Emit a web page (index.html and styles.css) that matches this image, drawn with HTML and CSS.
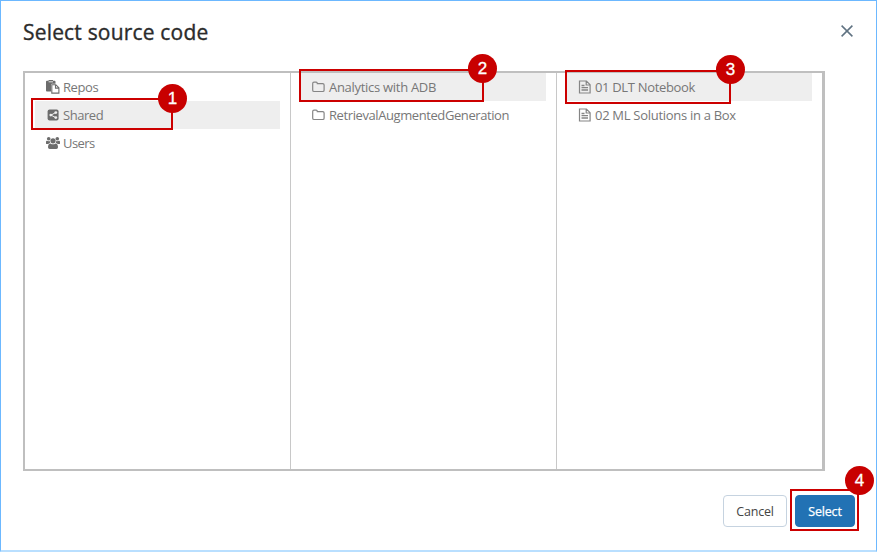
FILE: index.html
```html
<!DOCTYPE html>
<html lang="en">
<head>
<meta charset="utf-8">
<title>Select source code</title>
<link rel="stylesheet" href="styles.css">
</head>
<body>
<svg class="defs" width="0" height="0" aria-hidden="true">
  <symbol id="folder" viewBox="0 0 14 14"><path d="M.7 3.5Q.7 2.2 2 2.2H4.1Q5.3 2.2 5.3 3.4V3.7H10.7Q12.1 3.7 12.1 5V10.2Q12.1 11.5 10.7 11.5H2.1Q.7 11.5 .7 10.2Z" fill="none" stroke="currentColor" stroke-width="1.2"/></symbol>
  <symbol id="file" viewBox="0 0 14 14"><path d="M1.5 1H8.4L12.1 4.7V13H1.5ZM8.2 1V5H12.1" fill="none" stroke="currentColor" stroke-width="1.2"/><path d="M3.5 5.5H6.5M3.5 7.7H10M3.5 10H10" stroke="currentColor" stroke-width="1.3"/></symbol>
</svg>
<main class="dialog">
  <header class="header">
    <h1 class="title">Select source code</h1>
    <svg class="close" viewBox="0 0 12 12"><path d="M.6.6 11.4 11.4M11.4.6.6 11.4" stroke="#5f7281" stroke-width="1.5"/></svg>
  </header>
  <section class="browser">
    <ul class="column root">
      <li class="row"><svg class="icon" viewBox="0 0 14 14"><path d="M0 1.7Q0 .8.9.8H2.6V0H7V.8H8.6Q9.5.8 9.5 1.7V3.8H6.2Q5 3.8 5 5V11.5H.9Q0 11.5 0 10.6Z" fill="currentColor"/><path d="M2.6 1.8H7" stroke="#fff" stroke-width=".8"/><path d="M5.8 4.7H9.8L12.9 7.8V13.1H5.8ZM9.5 4.9V8.1H12.8" fill="none" stroke="currentColor" stroke-width="1.1"/></svg><span class="repos">Repos</span></li>
      <li class="row active"><svg class="icon" viewBox="0 0 14 14"><rect x="1.6" y="1.6" width="11" height="11" rx="2" fill="currentColor"/><path d="M9.8 4.5 5 7.1 9.8 9.7" fill="none" stroke="#eee" stroke-width="1"/><g fill="#eee"><circle cx="9.8" cy="4.6" r="1.4"/><circle cx="4.8" cy="7.1" r="1.4"/><circle cx="9.8" cy="9.6" r="1.4"/></g></svg><span class="shared">Shared</span>
        <div class="callout one"><b class="badge">1</b></div></li>
      <li class="row"><svg class="icon" viewBox="0 0 14 14" fill="currentColor"><circle cx="2.7" cy="2.7" r="1.8"/><circle cx="11.3" cy="2.7" r="1.8"/><path d="M0 7.4V6Q0 4.4 1.2 4.7Q2.8 5.5 3.8 4.8Q3.6 6.2 4.3 7.1Q3 7.1 2.3 8H1Q0 8 0 7.4ZM14 7.4V6Q14 4.4 12.8 4.7Q11.2 5.5 10.2 4.8Q10.4 6.2 9.7 7.1Q11 7.1 11.7 8H13Q14 8 14 7.4Z"/><circle cx="7" cy="4.8" r="2.6"/><path d="M4.5 7.4Q7 9.2 9.5 7.4Q12 7.5 12 11.2Q12 13 10.3 13H3.7Q2 13 2 11.2Q2 7.5 4.5 7.4Z"/></svg><span class="users">Users</span></li>
    </ul>
    <ul class="column">
      <li class="row active"><svg class="icon"><use href="#folder"/></svg><span class="analytics">Analytics with ADB</span>
        <div class="callout two"><b class="badge">2</b></div></li>
      <li class="row"><svg class="icon"><use href="#folder"/></svg><span class="retrieval">RetrievalAugmentedGeneration</span></li>
    </ul>
    <ul class="column">
      <li class="row active"><svg class="icon"><use href="#file"/></svg><span class="dlt">01 DLT Notebook</span>
        <div class="callout three"><b class="badge">3</b></div></li>
      <li class="row"><svg class="icon"><use href="#file"/></svg><span class="ml">02 ML Solutions in a Box</span></li>
    </ul>
  </section>
  <footer class="footer">
    <button class="btn">Cancel</button>
    <div class="primary-wrap"><button class="btn primary">Select</button>
      <div class="callout four"><b class="badge">4</b></div></div>
  </footer>
</main>
</body>
</html>
```
FILE: styles.css
```css
* { box-sizing: border-box; }
body { margin: 0; background: #fff; font-family: "Open Sans", "Noto Sans", sans-serif; }
.defs { position: absolute; }
.dialog {
  width: 877px; height: 552px; padding: 0 17px 0 22px;
  border: 1px solid #6cb8ff; border-bottom: 2px solid #b9dfff;
  display: flex; flex-direction: column;
}
.header { height: 70px; display: flex; justify-content: space-between; align-items: flex-start; }
.title { margin: 15px 0 0 0; font-size: 21px; line-height: 32px; font-weight: 400; color: #2b2b2b; letter-spacing: .18px; -webkit-text-stroke: .35px #2b2b2b; }
.close { width: 12px; height: 12px; margin: 24px 6px 0 0; }
.browser { width: 802px; height: 400px; border: 2px solid #bfbfbf; border-right-width: 3px; display: grid; grid-template-columns: 266px 266px 1fr; }
.column { margin: 0; padding: 0; list-style: none; border-right: 1px solid #c8c8c8; }
.column:last-child { border-right: 0; }
.row {
  position: relative; height: 28px; margin: 0 10px; padding-left: 11px;
  display: flex; align-items: center; gap: 3px;
  font-size: 13px; line-height: 20px; color: #777; white-space: nowrap;
}
.row.active { background: #eee; }
.repos { letter-spacing: -.4px; }
.shared { letter-spacing: -.45px; }
.users { letter-spacing: -.55px; }
.analytics { letter-spacing: -.29px; }
.retrieval { letter-spacing: -.41px; }
.dlt { letter-spacing: -.33px; }
.ml { letter-spacing: -.29px; }
.icon { width: 14px; height: 14px; flex: none; color: #858585; }
.root .icon { color: #6c6c6c; }
.callout { position: absolute; border: 2px solid #c00; pointer-events: none; z-index: 1; }
.badge {
  position: absolute; width: 29px; height: 29px; border-radius: 50%; background: #c80000; color: #fff;
  font: 400 17px/29px "Liberation Sans", sans-serif; text-align: center; -webkit-text-stroke: .3px #fff;
}
.one { left: -4px; top: -3px; width: 142px; height: 32px; }
.two { left: -2px; top: -4px; width: 185px; height: 33px; }
.three { left: -2px; top: -3px; width: 166px; height: 34px; }
.four { left: -5px; top: -6px; width: 69px; height: 42px; }
.one .badge { right: -16px; top: -16px; }
.two .badge { right: -15px; top: -17px; }
.three .badge { right: -16px; top: -17px; }
.four .badge { right: -17px; top: -25px; }
.footer { display: flex; justify-content: flex-end; gap: 8px; padding: 24px 4px 0 0; }
.btn {
  width: 64px; height: 32px; padding: 2px 0 0; border: 1px solid #c6d3e0; border-radius: 4px; background: #fff;
  font: 400 12.5px/20px "Open Sans", sans-serif; color: #444; letter-spacing: -.2px;
}
.primary-wrap { position: relative; }
.primary { display: block; width: 60px; background: #2272b4; border-color: #2272b4; color: #fff; -webkit-text-stroke: .25px #fff; }
```
